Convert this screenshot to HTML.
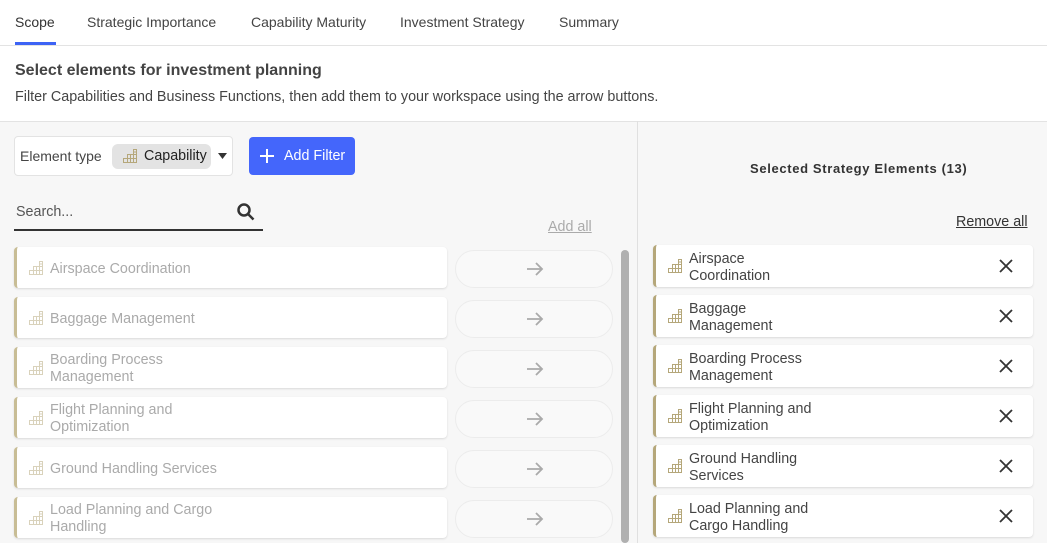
<!DOCTYPE html>
<html><head><style>
*{margin:0;padding:0;box-sizing:border-box}
body{width:1047px;height:543px;overflow:hidden;font-family:"Liberation Sans",sans-serif;background:#fff;position:relative;color:#333}
.a{position:absolute}
.tab{position:absolute;top:14px;font-size:14px;color:#444}
.row{position:absolute;left:14px;width:433px;height:41px;background:#fff;border-radius:4px;border-left:3px solid #c8bd95;box-shadow:0 1px 2px rgba(0,0,0,.12);font-size:14.3px;color:#aaa;line-height:17px}
.row svg{position:absolute;left:12px;top:14px}
.row span{position:absolute;left:33px}
.arr{position:absolute;left:455px;width:158px;height:38px;border:1px solid #ececec;border-radius:19px;background:#f9f9f9}
.arr svg{position:absolute;left:70px;top:10px}
.r{position:absolute;left:653px;width:380px;height:42px;background:#fff;border-radius:4px;border-left:3px solid #b5a77a;box-shadow:0 1px 2px rgba(0,0,0,.12);font-size:14.3px;color:#444;line-height:17px}
.r svg.i{position:absolute;left:12px;top:14px}
.r span{position:absolute;left:33px}
.r .x{position:absolute;right:20px;top:14px}
</style></head><body>
<svg width="0" height="0" style="position:absolute"><defs>
<g id="cap" fill="none" stroke-width="1"><path d="M10.5 0.5h3v13h-13v-4h4v-4h6zM4.5 9.5h9M4.5 5.5v8M7.5 5.5v8M10.5 5.5v8M10.5 5.5h3M10.5 3h3"/></g>
<g id="ar" fill="none" stroke="#aaa" stroke-width="1.8"><path d="M1 8h15M10 2l6 6-6 6"/></g>
</defs></svg>
<div class="tab" style="left:15px;color:#333">Scope</div>
<div class="a" style="left:15px;top:42px;width:41px;height:3px;background:#3d63f5"></div>
<div class="tab" style="left:87px">Strategic Importance</div>
<div class="tab" style="left:251px">Capability Maturity</div>
<div class="tab" style="left:400px">Investment Strategy</div>
<div class="tab" style="left:559px">Summary</div>
<div class="a" style="left:0;top:45px;width:1047px;height:1px;background:#e3e3e3"></div>
<div class="a" style="left:15px;top:62px;font-size:16px;font-weight:bold;color:#444">Select elements for investment planning</div>
<div class="a" style="left:15px;top:89px;font-size:14.35px;color:#444">Filter Capabilities and Business Functions, then add them to your workspace using the arrow buttons.</div>
<div class="a" style="left:0;top:121px;width:1047px;height:422px;background:#f7f7f7;border-top:1px solid #e3e3e3"></div>
<div class="a" style="left:637px;top:121px;width:1px;height:422px;background:#e0e0e0"></div>
<div class="a" style="left:14px;top:136px;width:219px;height:40px;background:#fff;border:1px solid #e3e3e3;border-radius:4px"></div>
<div class="a" style="left:20px;top:148px;font-size:14px;color:#444">Element type</div>
<div class="a" style="left:112px;top:144px;width:99px;height:25px;background:#e3e3e3;border-radius:6px"></div>
<svg class="a" style="left:123px;top:149px" width="14" height="14" stroke="#b5a77a"><use href="#cap"/></svg>
<div class="a" style="left:144px;top:148px;font-size:14.3px;color:#222">Capability</div>
<svg class="a" style="left:218px;top:153px" width="10" height="7"><path d="M0 0h9L4.5 6z" fill="#333"/></svg>
<div class="a" style="left:249px;top:137px;width:106px;height:38px;background:#4466fb;border-radius:4px;color:#fff;font-size:14.3px;line-height:38px;padding-left:35px">Add Filter</div>
<svg class="a" style="left:259px;top:148px" width="16" height="16" stroke="#fff" stroke-width="2"><path d="M8 1v14M1 8h14"/></svg>
<div class="a" style="left:16px;top:204px;font-size:14.3px;color:#555">Search...</div>
<svg class="a" style="left:236px;top:202px" width="20" height="20" fill="none" stroke="#333" stroke-width="2.5"><circle cx="8" cy="8" r="5.5"/><path d="M12 12l5.5 5.5"/></svg>
<div class="a" style="left:14px;top:229px;width:249px;height:2px;background:#333"></div>
<div class="a" style="left:548px;top:219px;font-size:14.3px;color:#aaa;text-decoration:underline">Add all</div>
<div class="a" style="left:621px;top:250px;width:8px;height:293px;background:#b0b0b0;border-radius:4px"></div>

<div class="row" style="top:247px"><svg width="14" height="14" stroke="#d9d2bb"><use href="#cap"/></svg><span style="top:14px">Airspace Coordination</span></div>
<div class="row" style="top:297px"><svg width="14" height="14" stroke="#d9d2bb"><use href="#cap"/></svg><span style="top:14px">Baggage Management</span></div>
<div class="row" style="top:347px"><svg width="14" height="14" stroke="#d9d2bb"><use href="#cap"/></svg><span style="top:5px">Boarding Process<br>Management</span></div>
<div class="row" style="top:397px"><svg width="14" height="14" stroke="#d9d2bb"><use href="#cap"/></svg><span style="top:5px">Flight Planning and<br>Optimization</span></div>
<div class="row" style="top:447px"><svg width="14" height="14" stroke="#d9d2bb"><use href="#cap"/></svg><span style="top:14px">Ground Handling Services</span></div>
<div class="row" style="top:497px"><svg width="14" height="14" stroke="#d9d2bb"><use href="#cap"/></svg><span style="top:5px">Load Planning and Cargo<br>Handling</span></div>
<div class="arr" style="top:250px"><svg width="18" height="16"><use href="#ar"/></svg></div>
<div class="arr" style="top:300px"><svg width="18" height="16"><use href="#ar"/></svg></div>
<div class="arr" style="top:350px"><svg width="18" height="16"><use href="#ar"/></svg></div>
<div class="arr" style="top:400px"><svg width="18" height="16"><use href="#ar"/></svg></div>
<div class="arr" style="top:450px"><svg width="18" height="16"><use href="#ar"/></svg></div>
<div class="arr" style="top:500px"><svg width="18" height="16"><use href="#ar"/></svg></div>

<div class="a" style="left:750px;top:161px;font-size:13px;font-weight:bold;color:#333;letter-spacing:.65px">Selected Strategy Elements (13)</div>
<div class="a" style="left:956px;top:214px;font-size:14.3px;color:#333;text-decoration:underline">Remove all</div>

<div class="r" style="top:245px"><svg class="i" width="14" height="14" stroke="#b5a77a"><use href="#cap"/></svg><span style="top:6px">Airspace<br>Coordination</span><svg class="x" width="14" height="14" stroke="#333" stroke-width="1.8"><path d="M1 1l12 12M13 1L1 13"/></svg></div>
<div class="r" style="top:295px"><svg class="i" width="14" height="14" stroke="#b5a77a"><use href="#cap"/></svg><span style="top:6px">Baggage<br>Management</span><svg class="x" width="14" height="14" stroke="#333" stroke-width="1.8"><path d="M1 1l12 12M13 1L1 13"/></svg></div>
<div class="r" style="top:345px"><svg class="i" width="14" height="14" stroke="#b5a77a"><use href="#cap"/></svg><span style="top:6px">Boarding Process<br>Management</span><svg class="x" width="14" height="14" stroke="#333" stroke-width="1.8"><path d="M1 1l12 12M13 1L1 13"/></svg></div>
<div class="r" style="top:395px"><svg class="i" width="14" height="14" stroke="#b5a77a"><use href="#cap"/></svg><span style="top:6px">Flight Planning and<br>Optimization</span><svg class="x" width="14" height="14" stroke="#333" stroke-width="1.8"><path d="M1 1l12 12M13 1L1 13"/></svg></div>
<div class="r" style="top:445px"><svg class="i" width="14" height="14" stroke="#b5a77a"><use href="#cap"/></svg><span style="top:6px">Ground Handling<br>Services</span><svg class="x" width="14" height="14" stroke="#333" stroke-width="1.8"><path d="M1 1l12 12M13 1L1 13"/></svg></div>
<div class="r" style="top:495px"><svg class="i" width="14" height="14" stroke="#b5a77a"><use href="#cap"/></svg><span style="top:6px">Load Planning and<br>Cargo Handling</span><svg class="x" width="14" height="14" stroke="#333" stroke-width="1.8"><path d="M1 1l12 12M13 1L1 13"/></svg></div>
</body></html>
